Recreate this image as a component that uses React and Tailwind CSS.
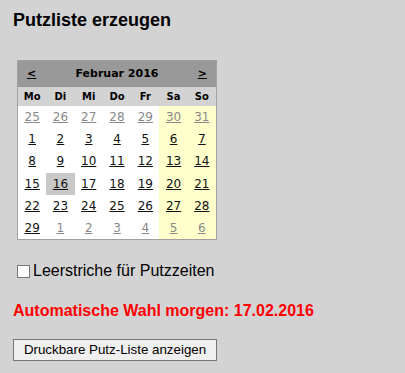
import React from "react";

const weeks = [
  [[25, 1], [26, 1], [27, 1], [28, 1], [29, 1], [30, 1], [31, 1]],
  [[1], [2], [3], [4], [5], [6], [7]],
  [[8], [9], [10], [11], [12], [13], [14]],
  [[15], [16], [17], [18], [19], [20], [21]],
  [[22], [23], [24], [25], [26], [27], [28]],
  [[29], [1, 1], [2, 1], [3, 1], [4, 1], [5, 1], [6, 1]],
];

const dayNames = ["Mo", "Di", "Mi", "Do", "Fr", "Sa", "So"];

const Calendar = () => {
  return (
    <div className="ml-[4px] w-[200px] border border-[#a0a0a0] bg-white font-['DejaVu_Sans',Verdana,sans-serif]">
      <div className="flex h-[26px] items-center justify-between bg-[#999999] px-[9px] text-[11px] font-bold text-black">
        <span className="underline">&lt;</span>
        <span>Februar 2016</span>
        <span className="underline">&gt;</span>
      </div>
      <div className="grid h-[19px] grid-cols-7 items-center bg-[#d3d3d3] text-[10px] font-bold">
        {dayNames.map((d) => (
          <span key={d} className="text-center">
            {d}
          </span>
        ))}
      </div>
      <div className="grid grid-cols-7">
        {weeks.map((week, wi) =>
          week.map(([day, other], i) => (
            <div
              key={wi + "-" + i}
              className={`flex h-[22.2px] items-center justify-center text-[12px] underline ${
                i >= 5 ? "bg-[#ffffcc]" : ""
              } ${day === 16 && !other ? "bg-[#c8c8c8]" : ""} ${
                other ? "text-[#888888]" : "text-[#111111]"
              }`}
            >
              {day}
            </div>
          ))
        )}
      </div>
    </div>
  );
};

const App = () => {
  return (
    <main className="min-h-[373px] w-full bg-[#d3d3d3] px-[13px] pt-[9px] font-['Liberation_Sans',Arial,sans-serif] text-black">
      <h1 className="text-[18px] font-bold leading-[22px]">Putzliste erzeugen</h1>
      <div className="mt-[29px]">
        <Calendar />
      </div>
      <label className="mt-[22px] flex items-center text-[16px] leading-[18px]">
        <span className="ml-[4px] mr-[3px] inline-block h-[13px] w-[13px] border border-[#767676] bg-white"></span>
        Leerstriche für Putzzeiten
      </label>
      <p className="mt-[22px] text-[16px] font-bold leading-[18px] text-[#ff0000]">
        Automatische Wahl morgen: 17.02.2016
      </p>
      <button className="mt-[19px] h-[22px] w-[204px] border border-[#767676] bg-[#efefef] text-[13.33px] leading-[18px] text-black">
        Druckbare Putz-Liste anzeigen
      </button>
    </main>
  );
};

export default App;
